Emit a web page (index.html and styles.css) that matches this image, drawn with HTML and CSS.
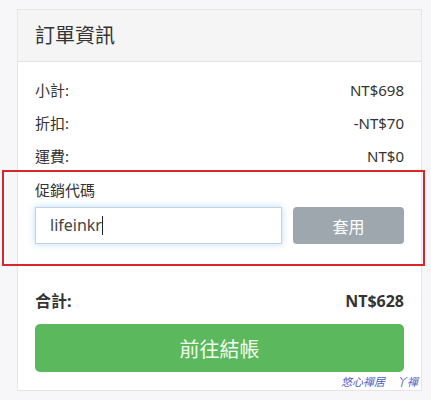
FILE: index.html
```html
<!DOCTYPE html>
<html lang="zh-Hant">
<head>
    <meta charset="UTF-8">
    <meta name="viewport" content="width=device-width, initial-scale=1.0">
    <title>訂單資訊</title>
    <link rel="stylesheet" href="styles.css">
</head>
<body>
    <div class="order-card">
        <div class="order-header">訂單資訊</div>
        <div class="order-body">
            <div class="row"><span>小計:</span><span>NT$698</span></div>
            <div class="row"><span>折扣:</span><span>-NT$70</span></div>
            <div class="row"><span>運費:</span><span>NT$0</span></div>

            <div class="promo">
                <label class="promo-label">促銷代碼</label>
                <div class="promo-form">
                    <div class="promo-input">lifeinkr<span class="caret"></span></div>
                    <button class="apply-btn">套用</button>
                </div>
            </div>

            <div class="row total"><span>合計:</span><span>NT$628</span></div>
            <button class="checkout-btn">前往結帳</button>
        </div>
        <div class="watermark">悠心禪居　丫禪</div>
    </div>
</body>
</html>
```
FILE: styles.css
```css
body {
    margin: 0;
    background: #f7f7f9;
    font-family: "Noto Sans", "Noto Sans CJK TC", sans-serif;
    color: #333;
}
.order-card {
    position: relative;
    width: 403px;
    margin: 9px 0 0 17px;
    background: #fff;
    border: 1px solid #e6e6e8;
}
.order-header {
    height: 51px;
    line-height: 51px;
    padding-left: 17px;
    background: #f5f5f5;
    border-bottom: 1px solid #e3e3e3;
    font-size: 20px;
    color: #333;
}
.order-body {
    padding: 12px 17px 18px;
}
.row {
    display: flex;
    justify-content: space-between;
    height: 33px;
    line-height: 33px;
    font-size: 15px;
}
.promo {
    position: relative;
    padding-top: 6px;
    margin-bottom: 41px;
}
.promo::before {
    content: "";
    position: absolute;
    left: -33px;
    right: -21px;
    top: -3px;
    bottom: -22px;
    border: 2px solid #d9262b;
}
.promo-label {
    display: block;
    line-height: 22px;
    font-size: 15px;
}
.promo-form {
    display: flex;
    gap: 11px;
    margin-top: 6px;
}
.promo-input {
    flex: 1;
    height: 35px;
    line-height: 35px;
    padding-left: 14px;
    border: 1px solid #c4d3e2;
    box-shadow: 0 0 7px rgba(102, 175, 233, 0.45);
    font-size: 16px;
    color: #444;
}
.caret {
    display: inline-block;
    width: 1px;
    height: 19px;
    vertical-align: -4px;
    background: #222;
}
.apply-btn {
    width: 111px;
    height: 37px;
    border: none;
    border-radius: 4px;
    background: #9ea7ae;
    color: #fff;
    font-family: inherit;
    font-size: 16px;
}
.total {
    font-weight: bold;
    font-size: 16px;
}
.checkout-btn {
    display: block;
    width: 100%;
    height: 48px;
    margin-top: 6px;
    border: none;
    border-radius: 5px;
    background: #5cb85c;
    color: #f2fff0;
    font-family: inherit;
    font-size: 20px;
}
.watermark {
    position: absolute;
    right: 3px;
    bottom: 1px;
    font-size: 11px;
    font-style: italic;
    color: #4a5cc4;
}
```
